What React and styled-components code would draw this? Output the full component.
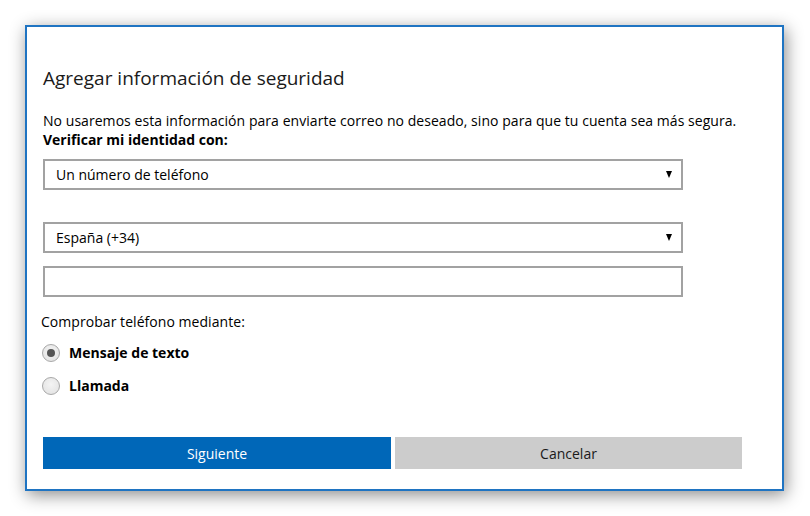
import React from "react";
import styled, { createGlobalStyle } from "styled-components";

const Global = createGlobalStyle`
  html, body { margin: 0; padding: 0; background: #ffffff; }
  body { font-family: "Open Sans", "Noto Sans", "Liberation Sans", sans-serif; color: #000; }
  * { box-sizing: border-box; }
`;

const Page = styled.div`
  padding: 25px 0 0 25px;
  width: 810px;
  height: 516px;
`;

const Window = styled.div`
  width: 759px;
  height: 466px;
  background: #fff;
  border: 2px solid #1f74c2;
  box-shadow: 2px 4px 16px rgba(0, 0, 0, 0.45);
  padding: 38px 0 0 16px;
  display: flex;
  flex-direction: column;
`;

const Title = styled.h1`
  margin: 0;
  font-size: 19px;
  font-weight: 400;
  line-height: 26px;
  color: #1a1a1a;
`;

const Text = styled.p`
  margin: ${(p) => p.$mt || 0}px 0 0 ${(p) => p.$ml || 0}px;
  font-size: 14px;
  line-height: 19px;
  letter-spacing: ${(p) => (p.$bold ? 0 : 0.05)}px;
  font-weight: ${(p) => (p.$bold ? 700 : 400)};
  color: #000;
`;

const SelectBox = styled.div`
  margin-top: ${(p) => p.$mt}px;
  width: 640px;
  height: 31px;
  border: 2px solid #a2a2a2;
  display: flex;
  align-items: center;
  justify-content: space-between;
  padding: 0 9px 0 11px;
  font-size: 14px;
  color: #000;
  background: #fff;
`;

const Arrow = styled.span`
  width: 0;
  height: 0;
  border-left: 3.5px solid transparent;
  border-right: 3.5px solid transparent;
  border-top: 7px solid #000;
`;

const Input = styled.div`
  margin-top: 13px;
  width: 640px;
  height: 31px;
  border: 2px solid #a2a2a2;
  background: #fff;
`;

const RadioRow = styled.label`
  margin-top: ${(p) => p.$mt}px;
  display: flex;
  align-items: center;
  gap: 9px;
  margin-left: -1px;
  font-size: 14px;
  font-weight: 700;
  line-height: 19px;
`;

const RadioCircle = styled.span`
  width: 18px;
  height: 18px;
  border-radius: 50%;
  border: 1px solid #a8a8a8;
  background: radial-gradient(circle at 50% 40%, #f4f4f4 0%, #e0e0e0 100%);
  display: flex;
  align-items: center;
  justify-content: center;
  &::after {
    content: "";
    display: ${(p) => (p.$checked ? "block" : "none")};
    width: 8px;
    height: 8px;
    border-radius: 50%;
    background: #555;
  }
`;

const Buttons = styled.div`
  margin-top: 42px;
  display: flex;
  gap: 4px;
`;

const Button = styled.button`
  width: ${(p) => p.$w}px;
  height: 32px;
  border: 0;
  padding: 0;
  font-family: inherit;
  font-size: 14px;
  background: ${(p) => (p.$primary ? "#0067b8" : "#cccccc")};
  color: ${(p) => (p.$primary ? "#ffffff" : "#1a1a1a")};
`;

export default function App() {
  return (
    <>
      <Global />
      <Page>
        <Window>
          <Title>Agregar información de seguridad</Title>
          <Text $mt={20}>
            No usaremos esta información para enviarte correo no deseado, sino para que tu cuenta sea más segura.
          </Text>
          <Text $bold>Verificar mi identidad con:</Text>
          <SelectBox $mt={10}>
            <span>Un número de teléfono</span>
            <Arrow />
          </SelectBox>
          <SelectBox $mt={32}>
            <span>España (+34)</span>
            <Arrow />
          </SelectBox>
          <Input />
          <Text $mt={15} $ml={-2}>Comprobar teléfono mediante:</Text>
          <RadioRow $mt={12}>
            <RadioCircle $checked />
            Mensaje de texto
          </RadioRow>
          <RadioRow $mt={14}>
            <RadioCircle />
            Llamada
          </RadioRow>
          <Buttons>
            <Button $primary $w={348}>Siguiente</Button>
            <Button $w={347}>Cancelar</Button>
          </Buttons>
        </Window>
      </Page>
    </>
  );
}
